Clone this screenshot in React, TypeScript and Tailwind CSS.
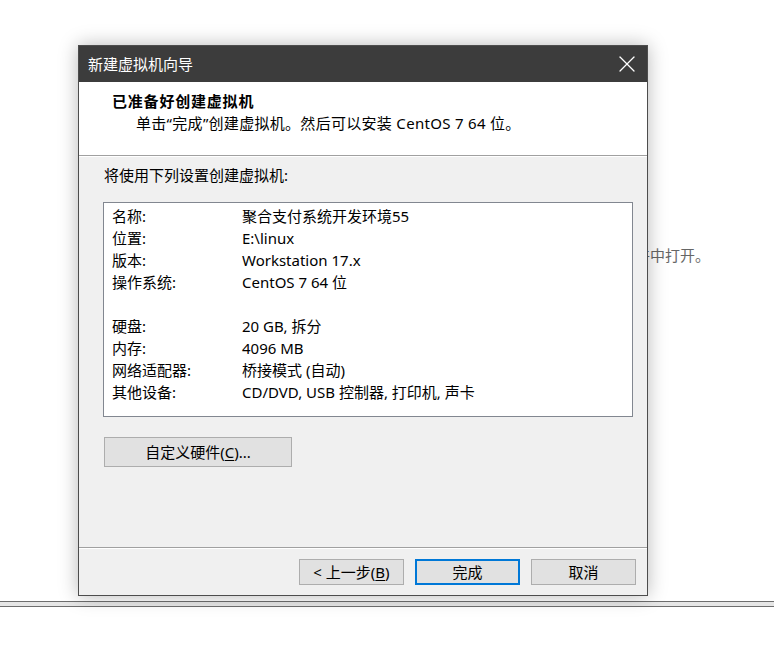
import { X } from "lucide-react";

const font = { fontFamily: '"Noto Sans", "Noto Sans CJK SC", sans-serif' };

const rows: [string, string][] = [
  ["名称:", "聚合支付系统开发环境55"],
  ["位置:", "E:\\linux"],
  ["版本:", "Workstation 17.x"],
  ["操作系统:", "CentOS 7 64 位"],
  ["", ""],
  ["硬盘:", "20 GB, 拆分"],
  ["内存:", "4096 MB"],
  ["网络适配器:", "桥接模式 (自动)"],
  ["其他设备:", "CD/DVD, USB 控制器, 打印机, 声卡"],
];

const App = () => {
  return (
    <div className="relative w-[774px] h-[656px] bg-white overflow-hidden text-[15px] text-black" style={font}>
      {/* page behind the dialog */}
      <div className="pt-[244px] pl-[440px] text-[#666666] leading-[22px]">创建后，该虚拟机将在新的文件中打开。</div>
      <div className="mt-[335px] h-[6px] border-y border-[#6e6e6e] bg-[#e6e6e6]" />

      {/* wizard dialog */}
      <div className="absolute left-[78px] top-[45px] w-[570px] h-[551px] flex flex-col border border-[#4d4d4d] bg-[#f0f0f0] shadow-[0_0_18px_rgba(0,0,0,0.28)]">
        <div className="h-[36px] flex items-center justify-between bg-[#3c3c3c] pl-[9px] pr-[6px] text-white">
          <span>新建虚拟机向导</span>
          <X size={28} strokeWidth={1.1} />
        </div>

        <div className="bg-white pt-[8px] pb-[21px] leading-[22px]">
          <div className="pl-[33px] font-bold tracking-[0.8px]">已准备好创建虚拟机</div>
          <div className="pl-[57px] tracking-[0.3px]">单击“完成”创建虚拟机。然后可以安装 CentOS 7 64 位。</div>
        </div>
        <div className="h-px bg-[#a0a0a0]" />
        <div className="h-px bg-white" />

        <div className="flex-1 pt-[7px] pl-[24px]">
          <div className="pl-px leading-[22px]">将使用下列设置创建虚拟机:</div>
          <div className="mt-[16px] w-[530px] h-[215px] border border-[#828790] bg-white pt-[2px] pl-[8px] leading-[22px]">
            {rows.map(([k, v], i) => (
              <div key={i} className="flex h-[22px]">
                <span className="w-[130px]">{k}</span>
                <span>{v}</span>
              </div>
            ))}
          </div>
          <button className="mt-[20px] ml-px w-[188px] h-[30px] bg-[#e1e1e1] border border-[#adadad] leading-none">
            自定义硬件(<span className="underline underline-offset-2">C</span>)...
          </button>
        </div>

        <div className="h-px bg-[#a0a0a0]" />
        <div className="h-px bg-white" />
        <div className="flex justify-end gap-[11px] pt-[10px] pb-[10px] pr-[11px]">
          <button className="w-[105px] h-[26px] bg-[#e1e1e1] border border-[#adadad] leading-none">
            &lt;&nbsp;上一步(<span className="underline underline-offset-2">B</span>)
          </button>
          <button className="w-[105px] h-[26px] bg-[#e1e1e1] border-2 border-[#0078d7] leading-none">完成</button>
          <button className="w-[105px] h-[26px] bg-[#e1e1e1] border border-[#adadad] leading-none">取消</button>
        </div>
      </div>
    </div>
  );
};

export default App;
